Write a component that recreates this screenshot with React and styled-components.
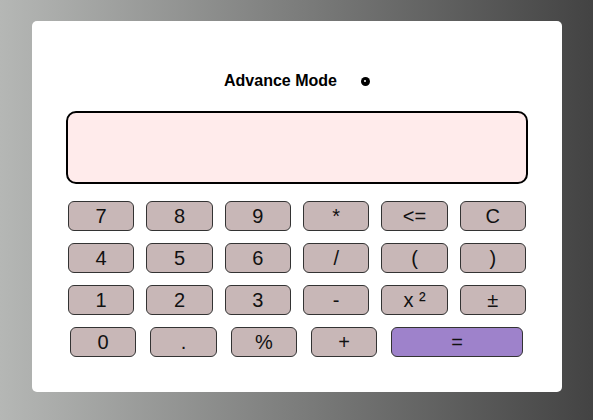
import styled, { createGlobalStyle } from 'styled-components';

const GlobalStyle = createGlobalStyle`
  html, body {
    margin: 0;
    padding: 0;
  }
  body {
    font-family: "Liberation Sans", Arial, sans-serif;
  }
`;

const Page = styled.div`
  width: 593px;
  height: 420px;
  box-sizing: border-box;
  padding: 21px 31px 28px 32px;
  background: linear-gradient(to right, #b5b7b5, #434343);
`;

const Card = styled.div`
  background: #fff;
  border-radius: 5px;
  height: 371px;
  box-sizing: border-box;
  padding: 51px 34px 0 34px;
`;

const Header = styled.div`
  display: flex;
  align-items: center;
  justify-content: center;
  gap: 24px;
  height: 18px;
`;

const ModeLabel = styled.span`
  font-weight: bold;
  font-size: 16px;
  color: #000;
`;

const Dot = styled.span`
  width: 9px;
  height: 9px;
  border-radius: 50%;
  background: #000;
  position: relative;
  &::after {
    content: '';
    position: absolute;
    left: 3px;
    top: 3px;
    width: 2px;
    height: 2px;
    border-radius: 50%;
    background: #fff;
  }
`;

const Display = styled.div`
  margin-top: 21px;
  height: 73px;
  box-sizing: border-box;
  border: 2px solid #000;
  border-radius: 10px;
  background: #ffebeb;
`;

const Grid = styled.div`
  margin: 17px 2px 0 2px;
  display: grid;
  grid-template-columns: repeat(6, 1fr);
  gap: 12px;
`;

const LastRow = styled.div`
  margin: 12px 5px 0 4px;
  display: flex;
  gap: 14px;
`;

const Key = styled.button`
  height: 30px;
  width: ${(p) => (p.$wide ? '133px' : p.$fixed ? '67px' : 'auto')};
  box-sizing: border-box;
  border: 1px solid #333;
  border-radius: 6px;
  background: ${(p) => (p.$accent ? '#9e82cb' : '#c8b7b7')};
  color: #111;
  font-family: "Liberation Sans", Arial, sans-serif;
  font-size: 20px;
  padding: 0;
  display: flex;
  align-items: center;
  justify-content: center;
  cursor: pointer;
`;

const rows = ['7', '8', '9', '*', '<=', 'C', '4', '5', '6', '/', '(', ')', '1', '2', '3', '-', 'x ²', '±'];

const App = () => {
  return (
    <>
      <GlobalStyle />
      <Page>
        <Card>
          <Header>
            <ModeLabel>Advance Mode</ModeLabel>
            <Dot />
          </Header>
          <Display />
          <Grid>
            {rows.map((k) => (
              <Key key={k}>{k}</Key>
            ))}
          </Grid>
          <LastRow>
            <Key $fixed>0</Key>
            <Key $fixed>.</Key>
            <Key $fixed>%</Key>
            <Key $fixed>+</Key>
            <Key $wide $accent>=</Key>
          </LastRow>
        </Card>
      </Page>
    </>
  );
};

export default App;
